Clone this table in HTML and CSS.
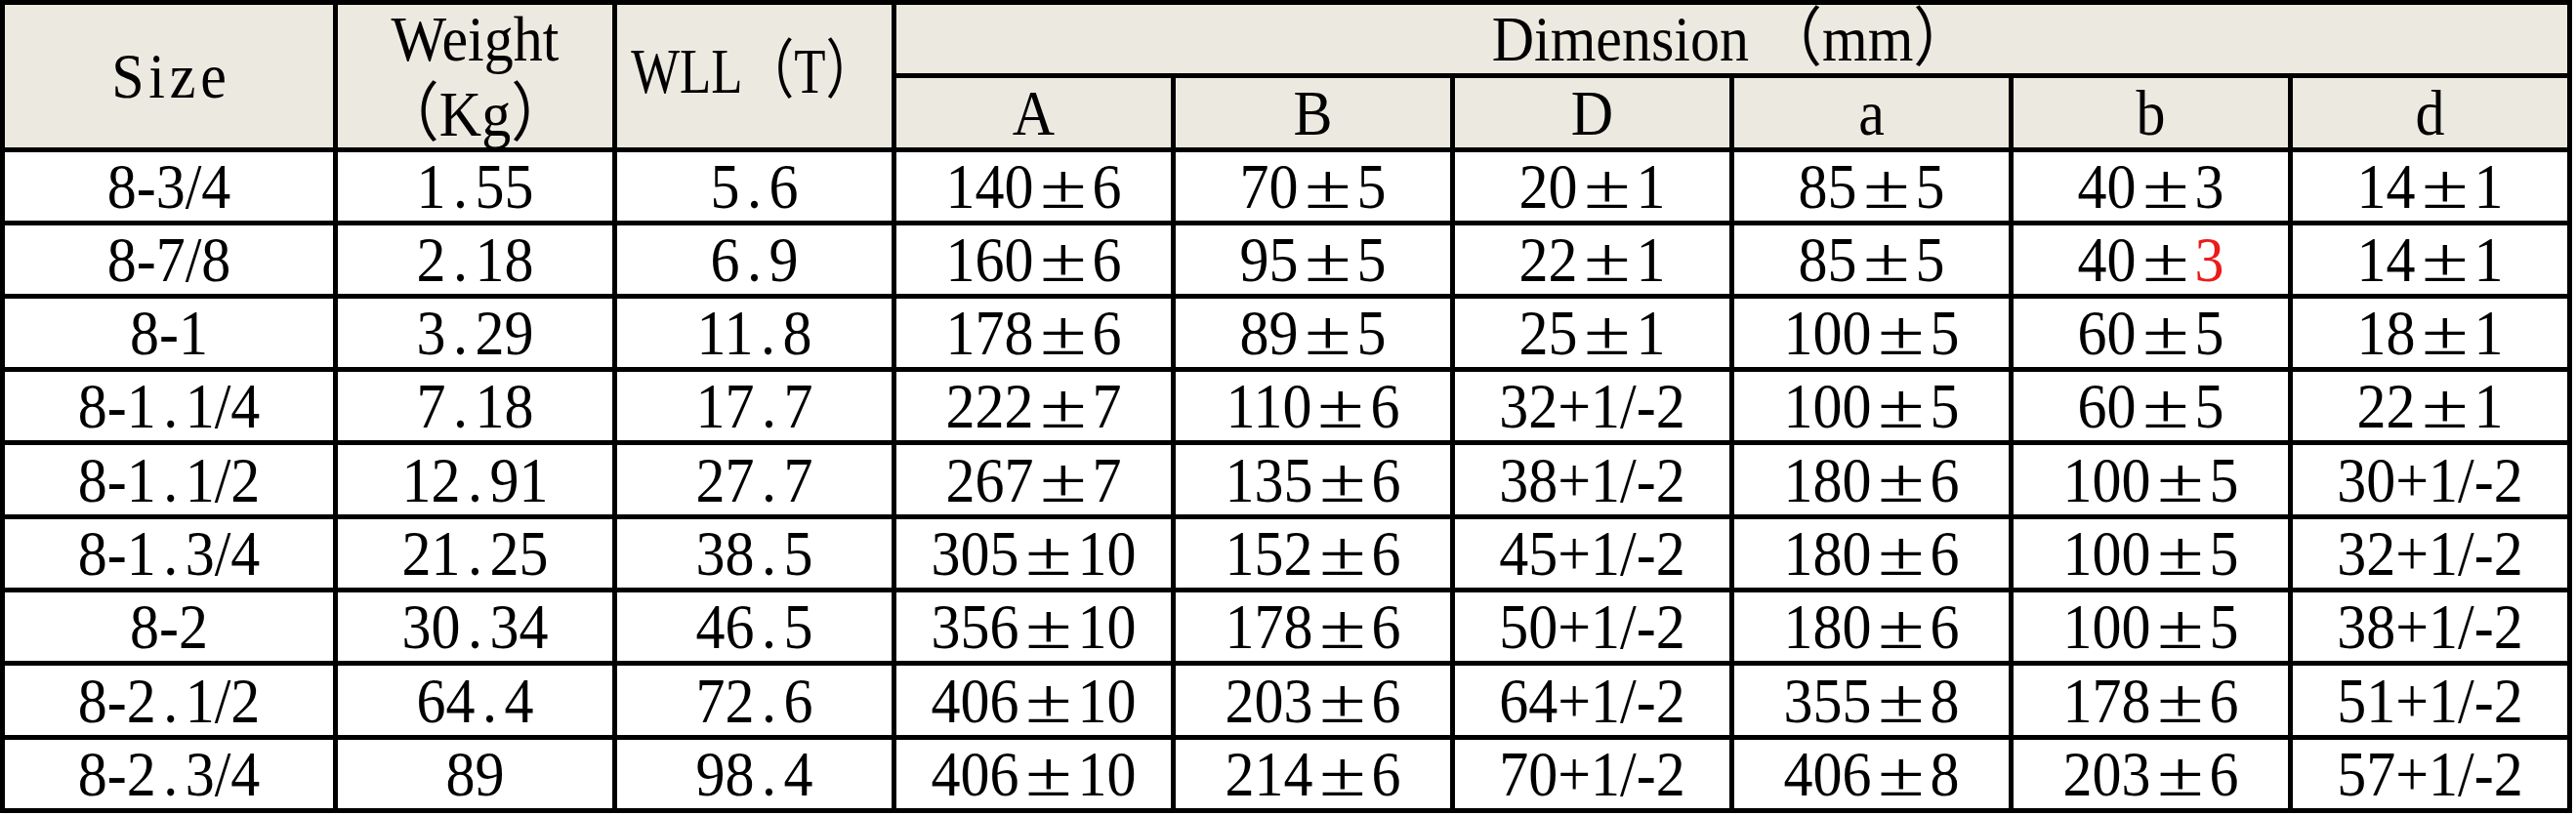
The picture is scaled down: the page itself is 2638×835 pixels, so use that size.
FILE: index.html
```html
<!DOCTYPE html>
<html>
<head>
<meta charset="utf-8">
<link rel="stylesheet" href="styles.css">
</head>
<body>
<div class="spec">
  <div class="cell head tall"><span class="t wide">Size</span></div>
  <div class="cell head tall"><span class="t two">Weight<br>（Kg）</span></div>
  <div class="cell head tall wll"><span class="t narrow">WLL（T）</span></div>
  <div class="cell head dim"><span class="t">Dimension （mm）</span></div>
  <div class="cell head"><span class="t">A</span></div>
  <div class="cell head"><span class="t">B</span></div>
  <div class="cell head"><span class="t">D</span></div>
  <div class="cell head"><span class="t">a</span></div>
  <div class="cell head"><span class="t">b</span></div>
  <div class="cell head"><span class="t">d</span></div>

  <div class="cell"><span class="t">8-3/4</span></div>
  <div class="cell"><span class="t">1<span class="dot">.</span>55</span></div>
  <div class="cell"><span class="t">5<span class="dot">.</span>6</span></div>
  <div class="cell"><span class="t">140<span class="pm">±</span>6</span></div>
  <div class="cell"><span class="t">70<span class="pm">±</span>5</span></div>
  <div class="cell"><span class="t">20<span class="pm">±</span>1</span></div>
  <div class="cell"><span class="t">85<span class="pm">±</span>5</span></div>
  <div class="cell"><span class="t">40<span class="pm">±</span>3</span></div>
  <div class="cell"><span class="t">14<span class="pm">±</span>1</span></div>

  <div class="cell"><span class="t">8-7/8</span></div>
  <div class="cell"><span class="t">2<span class="dot">.</span>18</span></div>
  <div class="cell"><span class="t">6<span class="dot">.</span>9</span></div>
  <div class="cell"><span class="t">160<span class="pm">±</span>6</span></div>
  <div class="cell"><span class="t">95<span class="pm">±</span>5</span></div>
  <div class="cell"><span class="t">22<span class="pm">±</span>1</span></div>
  <div class="cell"><span class="t">85<span class="pm">±</span>5</span></div>
  <div class="cell"><span class="t">40<span class="pm">±</span><span class="red">3</span></span></div>
  <div class="cell"><span class="t">14<span class="pm">±</span>1</span></div>

  <div class="cell"><span class="t">8-1</span></div>
  <div class="cell"><span class="t">3<span class="dot">.</span>29</span></div>
  <div class="cell"><span class="t">11<span class="dot">.</span>8</span></div>
  <div class="cell"><span class="t">178<span class="pm">±</span>6</span></div>
  <div class="cell"><span class="t">89<span class="pm">±</span>5</span></div>
  <div class="cell"><span class="t">25<span class="pm">±</span>1</span></div>
  <div class="cell"><span class="t">100<span class="pm">±</span>5</span></div>
  <div class="cell"><span class="t">60<span class="pm">±</span>5</span></div>
  <div class="cell"><span class="t">18<span class="pm">±</span>1</span></div>

  <div class="cell"><span class="t">8-1<span class="dot">.</span>1/4</span></div>
  <div class="cell"><span class="t">7<span class="dot">.</span>18</span></div>
  <div class="cell"><span class="t">17<span class="dot">.</span>7</span></div>
  <div class="cell"><span class="t">222<span class="pm">±</span>7</span></div>
  <div class="cell"><span class="t">110<span class="pm">±</span>6</span></div>
  <div class="cell"><span class="t">32+1/-2</span></div>
  <div class="cell"><span class="t">100<span class="pm">±</span>5</span></div>
  <div class="cell"><span class="t">60<span class="pm">±</span>5</span></div>
  <div class="cell"><span class="t">22<span class="pm">±</span>1</span></div>

  <div class="cell"><span class="t">8-1<span class="dot">.</span>1/2</span></div>
  <div class="cell"><span class="t">12<span class="dot">.</span>91</span></div>
  <div class="cell"><span class="t">27<span class="dot">.</span>7</span></div>
  <div class="cell"><span class="t">267<span class="pm">±</span>7</span></div>
  <div class="cell"><span class="t">135<span class="pm">±</span>6</span></div>
  <div class="cell"><span class="t">38+1/-2</span></div>
  <div class="cell"><span class="t">180<span class="pm">±</span>6</span></div>
  <div class="cell"><span class="t">100<span class="pm">±</span>5</span></div>
  <div class="cell"><span class="t">30+1/-2</span></div>

  <div class="cell"><span class="t">8-1<span class="dot">.</span>3/4</span></div>
  <div class="cell"><span class="t">21<span class="dot">.</span>25</span></div>
  <div class="cell"><span class="t">38<span class="dot">.</span>5</span></div>
  <div class="cell"><span class="t">305<span class="pm">±</span>10</span></div>
  <div class="cell"><span class="t">152<span class="pm">±</span>6</span></div>
  <div class="cell"><span class="t">45+1/-2</span></div>
  <div class="cell"><span class="t">180<span class="pm">±</span>6</span></div>
  <div class="cell"><span class="t">100<span class="pm">±</span>5</span></div>
  <div class="cell"><span class="t">32+1/-2</span></div>

  <div class="cell"><span class="t">8-2</span></div>
  <div class="cell"><span class="t">30<span class="dot">.</span>34</span></div>
  <div class="cell"><span class="t">46<span class="dot">.</span>5</span></div>
  <div class="cell"><span class="t">356<span class="pm">±</span>10</span></div>
  <div class="cell"><span class="t">178<span class="pm">±</span>6</span></div>
  <div class="cell"><span class="t">50+1/-2</span></div>
  <div class="cell"><span class="t">180<span class="pm">±</span>6</span></div>
  <div class="cell"><span class="t">100<span class="pm">±</span>5</span></div>
  <div class="cell"><span class="t">38+1/-2</span></div>

  <div class="cell"><span class="t">8-2<span class="dot">.</span>1/2</span></div>
  <div class="cell"><span class="t">64<span class="dot">.</span>4</span></div>
  <div class="cell"><span class="t">72<span class="dot">.</span>6</span></div>
  <div class="cell"><span class="t">406<span class="pm">±</span>10</span></div>
  <div class="cell"><span class="t">203<span class="pm">±</span>6</span></div>
  <div class="cell"><span class="t">64+1/-2</span></div>
  <div class="cell"><span class="t">355<span class="pm">±</span>8</span></div>
  <div class="cell"><span class="t">178<span class="pm">±</span>6</span></div>
  <div class="cell"><span class="t">51+1/-2</span></div>

  <div class="cell"><span class="t">8-2<span class="dot">.</span>3/4</span></div>
  <div class="cell"><span class="t">89</span></div>
  <div class="cell"><span class="t">98<span class="dot">.</span>4</span></div>
  <div class="cell"><span class="t">406<span class="pm">±</span>10</span></div>
  <div class="cell"><span class="t">214<span class="pm">±</span>6</span></div>
  <div class="cell"><span class="t">70+1/-2</span></div>
  <div class="cell"><span class="t">406<span class="pm">±</span>8</span></div>
  <div class="cell"><span class="t">203<span class="pm">±</span>6</span></div>
  <div class="cell"><span class="t">57+1/-2</span></div>
</div>
</body>
</html>
```

FILE: styles.css
```css
html, body {
  margin: 0;
  padding: 0;
  background: #ffffff;
}

.spec {
  display: grid;
  width: max-content;
  grid-template-columns: 336px repeat(8, 281px);
  grid-template-rows: 70px 71px 70px 70px 70px 70px 71px 70px 70px 71px 70px;
  gap: 5px;
  padding: 5px;
  background: #000000;
  font-family: "Liberation Serif", "Noto Sans CJK SC", serif;
  font-size: 60px;
  color: #000000;
}

.cell {
  background: #ffffff;
  display: flex;
  align-items: center;
  justify-content: center;
  text-align: center;
  line-height: 1;
  white-space: nowrap;
}

.head {
  background: #ece9e0;
}

.tall {
  grid-row: span 2;
}

.dim {
  grid-column: span 6;
}

.t {
  display: inline-block;
  transform: scaleY(1.1);
}

.two {
  line-height: 70px;
}

.wll {
  padding-bottom: 10px;
}

.narrow {
  transform: scale(0.88, 1.1);
}

.wide {
  letter-spacing: 0.08em;
  margin-right: -0.08em;
}

.pm {
  display: inline-block;
  width: 1em;
  text-align: center;
  transform: scaleX(1.45);
}

.dot {
  display: inline-block;
  width: 0.5em;
  text-align: center;
}

.red {
  color: #ea1b1b;
}
```
